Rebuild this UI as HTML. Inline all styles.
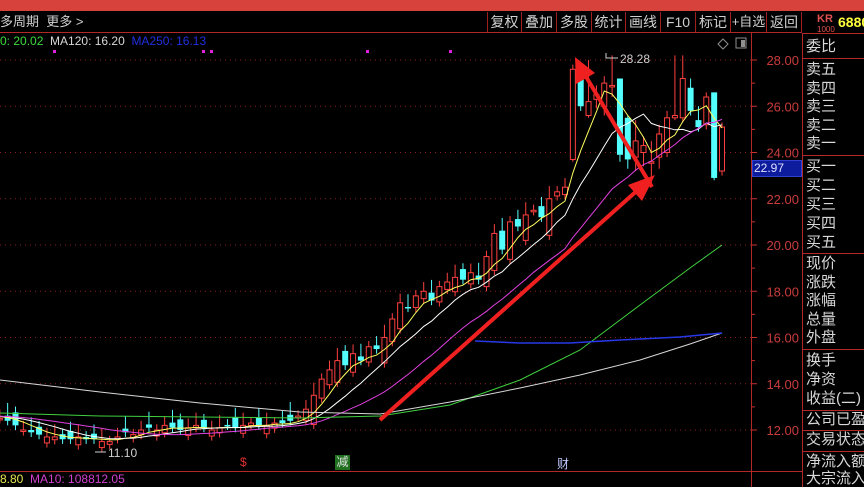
<!DOCTYPE html>
<html><head><meta charset="utf-8">
<style>
*{margin:0;padding:0;box-sizing:border-box}
body{width:864px;height:487px;background:#000;overflow:hidden;position:relative;font-family:"Liberation Sans","Noto Sans CJK SC",sans-serif;color:#c8c8c8}
.abs{position:absolute;white-space:nowrap}
#top{left:0;top:0;width:864px;height:11px;background:#d8423c}
.btn{position:absolute;top:12px;height:20px;border-left:1px solid #a02020;color:#d0d0d0;font-size:14px;line-height:20px;text-align:center}
#rpw{position:absolute;left:802px;top:0;width:62px;height:487px;overflow:hidden}
.rp{position:absolute;left:4px;font-size:15px;color:#d8d8d8;line-height:18px;white-space:nowrap}
.hl{position:absolute;left:0;width:62px;height:1px;background:#b02828}
</style></head><body>
<div id="top" class="abs"></div>
<div class="abs" style="left:0;top:12px;font-size:13px;line-height:20px;color:#d0d0d0">多周期 &nbsp;更多 &gt;</div>
<div class="btn" style="left:487px;width:34px">复权</div>
<div class="btn" style="left:521px;width:35px">叠加</div>
<div class="btn" style="left:556px;width:35px">多股</div>
<div class="btn" style="left:591px;width:34px">统计</div>
<div class="btn" style="left:625px;width:35px">画线</div>
<div class="btn" style="left:660px;width:35px">F10</div>
<div class="btn" style="left:695px;width:35px">标记</div>
<div class="btn" style="left:730px;width:36px;font-size:13px">+自选</div>
<div class="btn" style="left:766px;width:36px;border-right:1px solid #a02020">返回</div>
<div class="abs" style="left:817px;top:14px;font-size:11px;line-height:10px;color:#e05050;font-weight:bold">KR<br><span style="font-size:8px;font-weight:normal">1000</span></div>
<div class="abs" style="left:838px;top:14px;font-size:14px;color:#ffff3c;font-weight:bold">6880</div>
<div class="abs" style="left:0;top:32px;width:802px;height:1px;background:#b02828"></div>
<div class="abs" style="left:0;top:34px;font-size:12px;line-height:14px"><span style="color:#3cdc3c">0: 20.02</span> &nbsp;<span style="color:#d8d8d8">MA120: 16.20</span> &nbsp;<span style="color:#2030e0">MA250: 16.13</span></div>
<div class="abs" style="left:0;top:471px;width:802px;height:1px;background:#b02828"></div>
<div class="abs" style="left:0;top:472px;font-size:12px;line-height:15px"><span style="color:#e8e850">8.80</span> &nbsp;<span style="color:#d040d0">MA10: 108812.05</span></div>
<div class="abs" style="left:240px;top:455px;font-size:12px;color:#e03030">$</div>
<div class="abs" style="left:335px;top:455px;width:15px;height:15px;background:#207020;color:#e0e0e0;font-size:12px;line-height:15px;text-align:center">减</div>
<div class="abs" style="left:557px;top:455px;font-size:12px;color:#c0c8ff">财</div>
<svg class="abs" style="left:0;top:0" width="864" height="487" id="s"></svg>
<div class="abs" style="left:752px;top:160px;width:50px;height:17px;background:#0c1c9c;border:1px solid #3040d0;color:#e0e0ff;font-size:12px;line-height:15px;padding-left:1px">22.97</div>
<div class="abs" style="left:802px;top:33px;width:1px;height:454px;background:#b02828"></div>
<div id="rpw">
<div class="hl" style="top:33px"></div>
<div class="rp" style="top:38px">委比</div>
<div class="hl" style="top:58px"></div>
<div class="rp" style="top:61px;line-height:18.5px">卖五<br>卖四<br>卖三<br>卖二<br>卖一</div>
<div class="hl" style="top:155px"></div>
<div class="rp" style="top:157px;line-height:19px">买一<br>买二<br>买三<br>买四<br>买五</div>
<div class="hl" style="top:253px"></div>
<div class="rp" style="top:255px;line-height:18.6px">现价<br>涨跌<br>涨幅<br>总量<br>外盘</div>
<div class="hl" style="top:349px"></div>
<div class="rp" style="top:351px;line-height:19px">换手<br>净资<br>收益(二)</div>
<div class="hl" style="top:410px"></div>
<div class="rp" style="top:411px">公司已盈</div>
<div class="hl" style="top:430px"></div>
<div class="rp" style="top:431px">交易状态</div>
<div class="hl" style="top:451px"></div>
<div class="rp" style="top:453px;line-height:17px">净流入额<br>大宗流入</div>
</div>
<script>
var s=document.getElementById('s'),h='';
function Y(p){return 60+(28-p)*23.125}
for(var p=12;p<=28;p+=2){var y=Y(p);h+='<line x1="0" y1="'+y+'" x2="751" y2="'+y+'" stroke="#8a2020" stroke-dasharray="1,4"/>';
h+='<text x="799" y="'+(y+5)+'" fill="#c83c3c" font-size="13" text-anchor="end" font-family="Liberation Sans">'+p.toFixed(2)+'</text>';
h+='<line x1="751" y1="'+y+'" x2="757" y2="'+y+'" stroke="#c83030"/>';
var y2=Y(p+1);if(p<28)h+='<line x1="751" y1="'+y2+'" x2="755" y2="'+y2+'" stroke="#c83030"/>';}
h+='<line x1="751.5" y1="33" x2="751.5" y2="487" stroke="#b02828"/>';
var cl=[12.6,12.5,12.4,12.2,12.0,11.9,11.8,11.7,11.7,11.6,11.6,11.7,11.6,
11.6,11.5,11.5,11.7,11.9,11.8,12.0,12.1,12.0,12.2,12.1,12.0,12.1,12.2,12.1,12.0,12.1,12.2,12.1,12.2,12.3,12.2,12.2,12.3,12.3,12.4,
12.6,12.9,13.5,14.2,14.6,15.0,14.8,15.3,15.0,15.6,15.5,16.0,
16.8,17.5,17.3,17.8,18.0,17.6,18.2,18.4,18.6,18.5,18.8,18.5,
19.5,20.5,19.8,21.0,20.8,21.3,21.5,21.2,22.0,22.3,22.5];
var C=[];var prev=12.7;
for(var i=0;i<cl.length;i++){var c=cl[i],o=prev+((i*37%7)-3)*0.12;if(i>38)o=c-(c-prev)*1.6-((i%3)-1)*0.3;C.push([o,c,Math.max(o,c)+0.25+(i%3)*0.15,Math.min(o,c)-0.2]);prev=c;}
var M=[[23.7,27.6,27.8,23.6],[27.6,26.0,27.6,25.8],[25.6,26.2,28.0,25.5],[26.3,26.5,26.9,25.9],[26.0,27.0,27.3,25.6],[26.9,26.9,28.2,26.4],
[27.2,23.9,27.2,23.6],[25.5,23.7,25.6,23.3],[23.8,24.5,25.4,23.2],[24.0,24.3,24.7,23.4],[23.6,23.6,24.5,22.5],[23.8,24.8,25.2,23.3],[24.0,25.5,25.8,23.8],
[25.5,25.6,28.2,25.4],[25.5,27.2,28.2,25.3],[26.8,25.8,27.2,25.6],[25.4,25.1,26.0,24.9],[25.2,26.4,26.6,25.0],[26.6,22.9,26.6,22.8],[23.2,25.1,25.3,23.0]];
C=C.concat(M);var N=C.length,sp=7.85;
function X(i){return 722-(N-1-i)*sp}
for(i=0;i<N;i++){var k=C[i],x=X(i),up=k[1]>=k[0],col=up?'#ff4040':'#54ffff';
var t=Y(Math.max(k[0],k[1])),b=Y(Math.min(k[0],k[1]));if(b-t<1.5)b=t+1.5;
h+='<line x1="'+x+'" y1="'+Y(k[2])+'" x2="'+x+'" y2="'+Y(k[3])+'" stroke="'+col+'"/>';
if(up)h+='<rect x="'+(x-2.5)+'" y="'+t+'" width="5" height="'+(b-t)+'" fill="#000" stroke="'+col+'"/>';
else h+='<rect x="'+(x-3)+'" y="'+t+'" width="6" height="'+(b-t)+'" fill="'+col+'"/>';}
function ma(n,color){var pts=[];for(var i=0;i<N;i++){var sum=0;for(var j=0;j<n;j++){sum+=C[Math.max(0,i-j)][1]}pts.push(X(i).toFixed(1)+','+Y(sum/n).toFixed(1));}
h+='<polyline points="'+pts.join(' ')+'" fill="none" stroke="'+color+'" stroke-width="1"/>';}
ma(5,'#ffff60');ma(10,'#ffffff');ma(20,'#e040e0');
h+='<polyline points="0,413 100,416 200,417 300,418 380,416 450,405 520,380 580,350 640,305 690,268 722,245" fill="none" stroke="#40d040"/>';
h+='<polyline points="0,380 100,392 200,403 300,412 380,414 450,402 520,388 580,375 640,360 690,344 722,333" fill="none" stroke="#d8d8d8"/>';
h+='<polyline points="475,341 520,343 570,343 620,340 680,337 722,333" fill="none" stroke="#2838e8" stroke-width="1.5"/>';
h+='<line x1="380" y1="420" x2="640" y2="188" stroke="#f02020" stroke-width="4"/><polygon points="655,175 628,185 642,201" fill="#f02020"/>';
h+='<line x1="652" y1="187" x2="585" y2="75" stroke="#f02020" stroke-width="4"/><polygon points="575,57 576,84 595,73" fill="#f02020"/>';
h+='<text x="620" y="63" fill="#d0d0d0" font-size="12" font-family="Liberation Sans">28.28</text><polyline points="606,53 606,58 618,58" fill="none" stroke="#d0d0d0"/>';
h+='<text x="108" y="457" fill="#d0d0d0" font-size="12" font-family="Liberation Sans">11.10</text><line x1="95" y1="452" x2="106" y2="452" stroke="#d0d0d0"/>';
[53,202,210,366,449].forEach(function(x){h+='<rect x="'+x+'" y="50" width="3" height="3" fill="#e020e0"/>'});
h+='<polygon points="723,39 728,44 723,49 718,44" fill="none" stroke="#909090"/><rect x="736" y="38" width="10" height="10" fill="none" stroke="#909090"/><rect x="741" y="40" width="4" height="7" fill="#909090"/>';
s.innerHTML=h;
</script>
</body></html>
